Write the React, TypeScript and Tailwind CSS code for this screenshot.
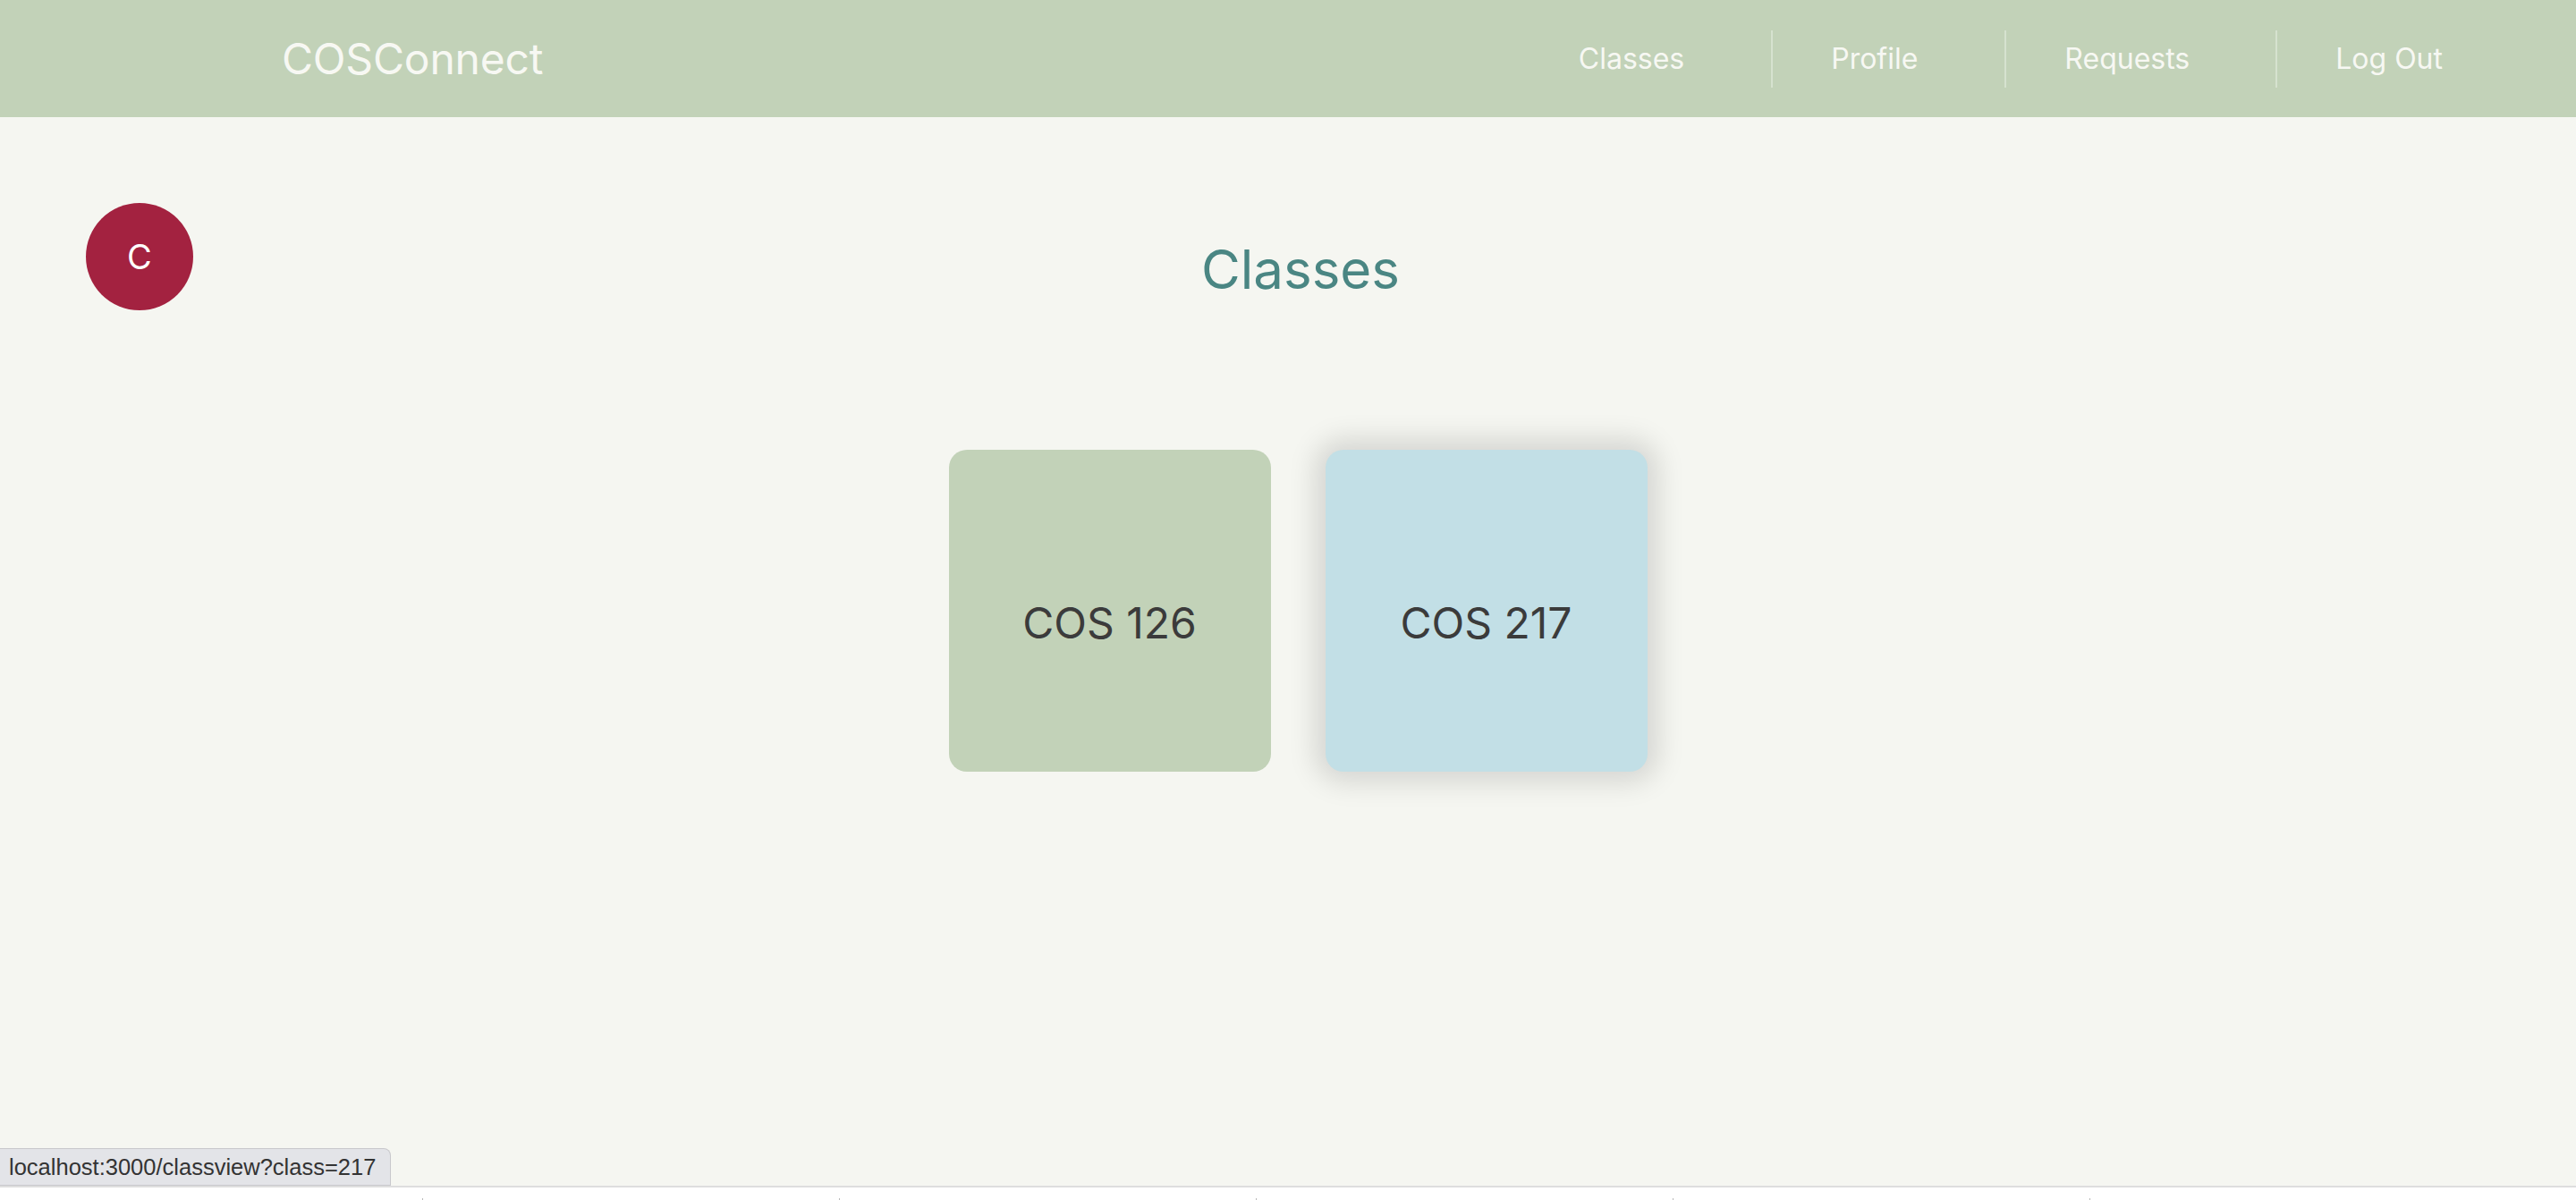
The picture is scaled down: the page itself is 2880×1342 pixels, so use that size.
import { useState } from "react";

const classes = [
  { code: "COS 126", bg: "bg-[#c2d2b8]" },
  { code: "COS 217", bg: "bg-[#c2dfe6]" },
];

export default function App() {
  const [hovered, setHovered] = useState<number | null>(1);

  return (
    <div className="h-screen w-full flex flex-col bg-[#f5f6f1] font-['Inter',sans-serif] overflow-hidden relative">
      {/* header */}
      <header className="h-[131px] shrink-0 bg-[#c2d2b8] flex items-center pl-[315px]">
        <h1 className="text-[48px] text-[#f7f8f3] tracking-[-0.2px]">COSConnect</h1>
        <nav className="ml-auto flex items-center pr-[149px] text-[32px] text-[#f7f8f3]">
          <a className="pr-[97px] cursor-pointer">Classes</a>
          <a className="h-[64px] flex items-center border-l-2 border-[#d6e2cf] pl-[65px] pr-[97px] cursor-pointer">Profile</a>
          <a className="h-[64px] flex items-center border-l-2 border-[#d6e2cf] pl-[65px] pr-[96px] cursor-pointer">Requests</a>
          <a className="h-[64px] flex items-center border-l-2 border-[#d6e2cf] pl-[65px] cursor-pointer">Log Out</a>
        </nav>
      </header>

      {/* content */}
      <main className="flex-1 grid grid-cols-[218px_1fr_196px] items-start">
        <div className="pt-[96px] pl-[96px]">
          <div className="w-[120px] h-[120px] rounded-full bg-[#a32240] flex items-center justify-center text-white text-[38px]">C</div>
        </div>
        <div className="pt-[140px] flex flex-col items-center">
          <h2 className="text-6xl text-[#4a8683] pl-[6px]">Classes</h2>
          <div className="mt-[172px] flex gap-[61px]">
            {classes.map((c, i) => (
              <div
                key={c.code}
                onMouseEnter={() => setHovered(i)}
                className={`w-[360px] h-[360px] rounded-[20px] ${c.bg} flex items-center justify-center cursor-pointer ${hovered === i ? "shadow-[0_0_30px_12px_rgba(0,0,0,0.13)]" : ""}`}
              >
                <span className="pt-[28px] text-[48px] text-[#3b3b3b]">{c.code}</span>
              </div>
            ))}
          </div>
        </div>
        <div />
      </main>

      {/* bottom strip */}
      <div className="shrink-0 border-t-2 border-[#dedede] bg-white h-[16px] flex items-end pl-[6px]">
        {[0, 1, 2, 3, 4, 5].map((i) => (
          <div key={i} className={`w-[466px] h-[2px] ${i > 0 ? "border-l border-[#b8b8b8]" : ""}`} />
        ))}
      </div>

      {/* browser status bubble */}
      <div className="absolute left-0 bottom-[16px] h-[42px] pl-[10px] pr-[16px] flex items-center bg-[#e3e4e8] border border-l-0 border-[#c8c8cc] rounded-tr-[8px] font-['Liberation_Sans',sans-serif] text-[25.5px] text-[#333]">
        localhost:3000/classview?class=217
      </div>
    </div>
  );
}
